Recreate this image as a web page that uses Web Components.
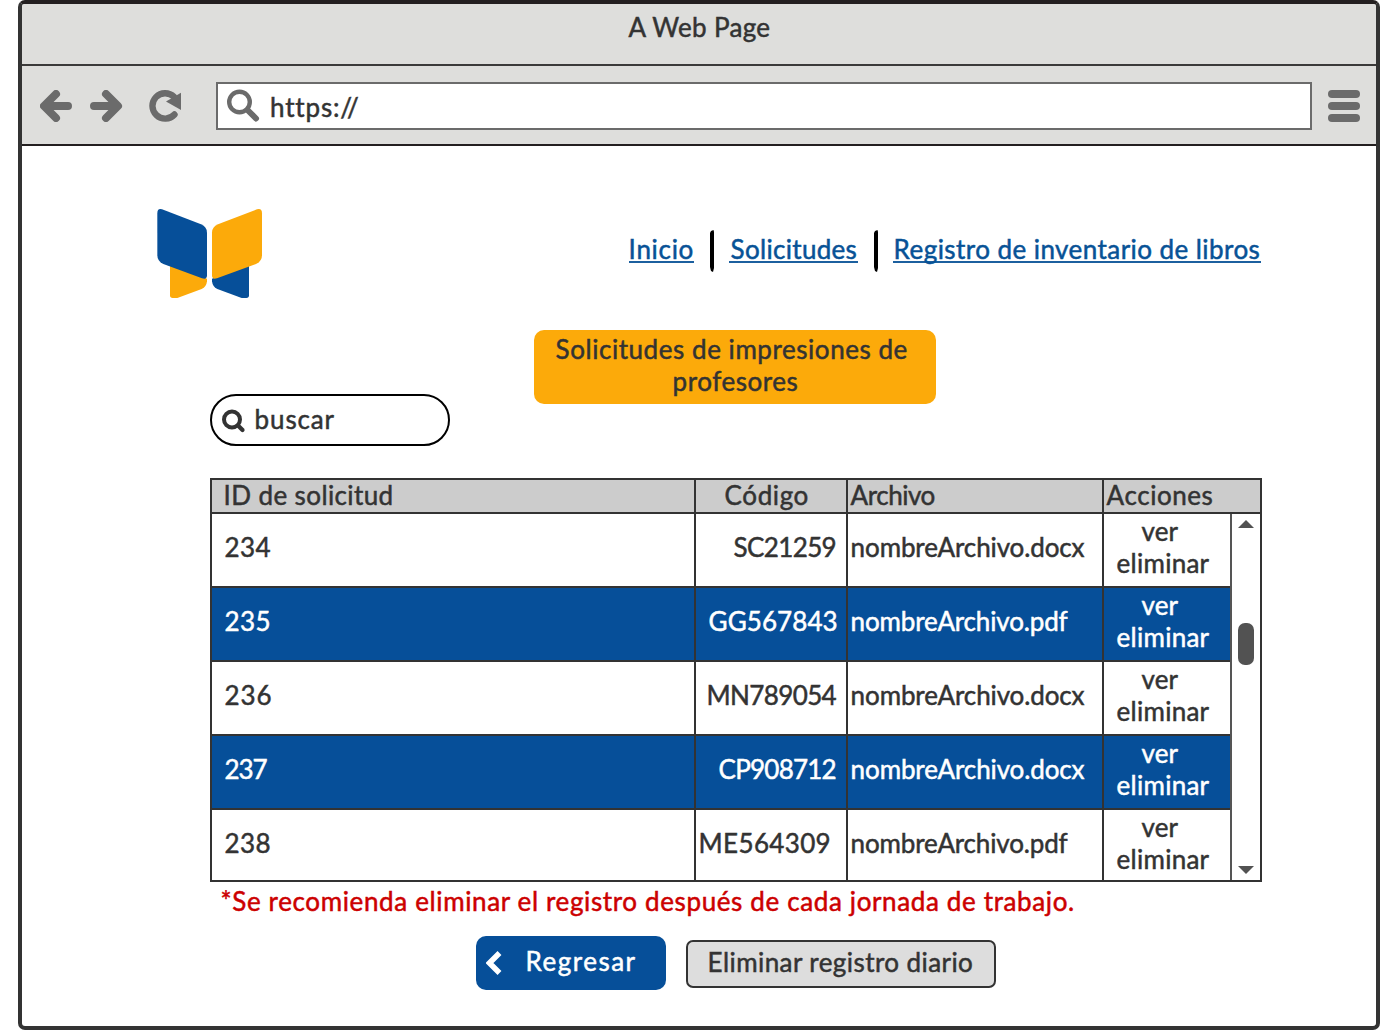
<!DOCTYPE html>
<html lang="es">
<head>
<meta charset="utf-8">
<title>A Web Page</title>
<style>
html,body{margin:0;padding:0;background:#fff}
body{font:26px/32px Lato,"Open Sans",sans-serif;color:#333;height:1030px;overflow:hidden}
</style>
</head>
<body>
<app-page></app-page>
<script>
const ctx = document.createElement('canvas').getContext('2d');

// Text set to an exact inked width by spreading its letters.
class FitText extends HTMLElement {
  connectedCallback() {
    const text = this.getAttribute('text'), w = +this.getAttribute('w');
    ctx.font = '26px Lato, "Open Sans", sans-serif';
    const m = ctx.measureText(text);
    const ink = m.actualBoundingBoxLeft + m.actualBoundingBoxRight;
    const gap = (w - ink) / (text.length - 1);
    this.attachShadow({mode: 'open'}).innerHTML = `<style>
      :host{display:block;box-sizing:border-box;flex:none;width:${w}px;height:32px;padding-top:1px;white-space:nowrap}
      span{display:block;width:max-content;font-size:26px;line-height:32px;margin-left:${m.actualBoundingBoxLeft + 0.6}px;
        letter-spacing:${gap}px;font-variant-ligatures:none;-webkit-text-stroke:.5px currentColor}
    </style><span></span>`;
    this.shadowRoot.querySelector('span').textContent = text;
  }
}
customElements.define('fit-text', FitText);

function define(name, html) {
  const t = document.createElement('template');
  t.innerHTML = html;
  customElements.define(name, class extends HTMLElement {
    constructor() {
      super();
      this.attachShadow({mode: 'open'}).append(t.content.cloneNode(true));
    }
  });
}

define('browser-toolbar', `<style>
  :host{display:flex;box-sizing:border-box;height:80px;background:#dededc;border-bottom:2px solid #231f20;padding:16px 16px 0 18px}
  svg{display:block;flex:none}
  .nav{margin-top:8px}
  .url{display:flex;box-sizing:border-box;width:1096px;height:48px;margin-left:34px;background:#fff;border:2px solid #6b6b6b;padding:5px 0 0 8px}
  fit-text{margin:1px 0 0 10.5px}
  .menu{display:flex;flex-direction:column;gap:4px;margin:8px 0 0 16px;width:32px}
  .menu i{height:8px;border-radius:4px;background:#6b6b6b}
</style>
<svg class="nav" width="142" height="32" fill="none" stroke="#6b6b6b" stroke-width="8" stroke-linecap="round" stroke-linejoin="round">
  <path d="M16 4L4 16L16 28M5 16H28M66 4L78 16L66 28M54 16H77"/>
  <path d="M134.500 24.500A12.700 12.700 0 1 1 134 6.800" stroke-width="6.400"/>
  <path d="M126 11.500L141 2.800V20Z" fill="#6b6b6b" stroke="none"/>
</svg>
<div class="url">
  <svg width="34" height="34" fill="none" stroke="#6b6b6b"><circle cx="13.500" cy="13" r="10.300" stroke-width="4.400"/><path d="M21.500 21L30 29.500" stroke-width="6" stroke-linecap="round"/></svg>
  <fit-text text="https://" w="86"></fit-text>
</div>
<div class="menu"><i></i><i></i><i></i></div>`);

define('browser-window', `<style>
  :host{display:block;box-sizing:border-box;width:1362px;height:1030px;margin-left:18px;border:4px solid #333;border-radius:7px;overflow:hidden;
    background:#fff;border-top-color:#231f20}
  .title{display:flex;justify-content:center;box-sizing:border-box;height:62px;padding-top:6px;background:#dededc;border-bottom:2px solid #3b3a3a}
</style>
<div class="title"><fit-text text="A Web Page" w="142"></fit-text></div>
<browser-toolbar></browser-toolbar>
<slot></slot>`);

define('book-logo', `<style>:host{display:block;width:106px;height:90px;padding-top:1px}svg{display:block}</style>
<svg width="106" height="89.500" viewBox="51 41 318 268.500">
  <path fill="#fcaa0a" d="M90 205L201 250V258Q199 275 185 281L112 308H98Q90 308 90 300Z"/>
  <path fill="#064f99" d="M327 205L216 250V258Q218 275 232 281L305 308H319Q327 308 327 300Z"/>
  <path fill="#064f99" d="M52 54Q52 38 66 42L183 87Q201 95 201 112V240Q201 254 186 249L70 206Q52 198 52 180Z"/>
  <path fill="#fcaa0a" d="M366 54Q366 38 351 42L234 87Q216 95 216 112V240Q216 254 231 249L348 206Q366 198 366 180Z"/>
</svg>`);

define('nav-links', `<style>
  :host{display:flex;align-items:flex-start}
  .link{color:#075296;border-bottom:2px solid #1c609f;height:29px;margin-top:2px;padding-left:1px;box-sizing:content-box}
  svg{display:block;margin:0 15px 0 16px}
</style>
<div class="link" style="width:64px"><fit-text text="Inicio" w="62"></fit-text></div>
<svg width="4" height="42"><path d="M1 1L3.500 0L4 2V38L3 42L1 41L0 37V3Z"/></svg>
<div class="link" style="width:128px;"><fit-text text="Solicitudes" w="126"></fit-text></div>
<svg width="4" height="42"><path d="M1 1L3.500 0L4 2V38L3 42L1 41L0 37V3Z"/></svg>
<div class="link" style="width:366px;padding-left:2px"><fit-text text="Registro de inventario de libros" w="364"></fit-text></div>`);

define('search-pill', `<style>
  :host{display:flex;box-sizing:border-box;width:240px;height:52px;border:2px solid #000;border-radius:26px;background:#fff;padding:6px 0 0 9px}
  svg{display:block;margin-top:7px}
  fit-text{margin-left:9px}
</style>
<svg width="25" height="26" fill="none" stroke="#333"><circle cx="11" cy="10.500" r="8" stroke-width="4"/><path d="M17 16.500L21.500 21" stroke-width="4.200" stroke-linecap="round"/></svg>
<fit-text text="buscar" w="79"></fit-text>`);

define('page-heading', `<style>
  :host{display:flex;flex-direction:column;align-items:center;box-sizing:border-box;width:402px;height:74px;padding:2px 0 0 0;border-radius:10px;background:#fcaa0a}
</style>
<fit-text text="Solicitudes de impresiones de" w="351" style="margin-right:9px"></fit-text>
<fit-text text="profesores" w="124"></fit-text>`);

define('scroll-bar', `<style>
  :host{display:flex;flex-direction:column;align-items:center;box-sizing:border-box;width:30px;border-left:2px solid #555;padding:6px 0}
  svg{display:block}
  i{width:16px;height:42px;margin:95px 0 auto;border-radius:7px;background:#525252}
</style>
<svg width="16" height="8"><path d="M0 8L8 0L16 8Z" fill="#525252"/></svg><i></i>
<svg width="16" height="8"><path d="M0 0L8 8L16 0Z" fill="#525252"/></svg>`);

class RequestTable extends HTMLElement {
  connectedCallback() {
    const rows = [
      ['234', 45, 'SC21259', 733, 835, 'docx'],
      ['235', 44, 'GG567843', 709, 836, 'pdf'],
      ['236', 45, 'MN789054', 708, 836, 'docx'],
      ['237', 42, 'CP908712', 719, 835, 'docx'],
      ['238', 44, 'ME564309', 700, 829, 'pdf']];
    this.attachShadow({mode: 'open'}).innerHTML = `<style>
      :host{display:block;box-sizing:border-box;width:1052px;height:404px;border:2px solid #333;background:#fff}
      .row,.head{display:grid;grid-template-columns:484px 152px 256px 1fr}
      .head{height:32px;background:#ccc;border-bottom:2px solid #333}
      .head>div{height:32px}
      .head fit-text{margin-top:-2px}
      .body{display:flex;height:366px}
      .rows{width:1018px}
      .row{box-sizing:border-box;height:74px;border-bottom:2px solid #333}
      .row:nth-child(even){background:#064f99;color:#fff}
      .row:last-child{height:70px;border:0}
      .row>div,.head>div{box-sizing:border-box;border-right:2px solid #333}
      .row>div:last-child,.head>div:last-child{border-right:0}
      .row>div{padding-top:16px;height:72px}
      .row:last-child>div{height:70px}
      .row>.act{padding-top:0}
    </style>
    <div class="head">
      <div style="padding-left:13px"><fit-text text="ID de solicitud" w="166"></fit-text></div>
      <div style="padding-left:29px"><fit-text text="Código" w="82"></fit-text></div>
      <div style="padding-left:2px"><fit-text text="Archivo" w="84"></fit-text></div>
      <div style="padding-left:2px"><fit-text text="Acciones" w="106"></fit-text></div>
    </div>
    <div class="body"><div class="rows">${rows.map(r => `<div class="row">
      <div style="padding-left:13px"><fit-text text="${r[0]}" w="${r[1]}"></fit-text></div>
      <div style="padding-left:${r[3] - 696}px"><fit-text text="${r[2]}" w="${r[4] - r[3]}"></fit-text></div>
      <div style="padding-left:3px"><fit-text text="nombreArchivo.${r[5]}" w="${r[5] === 'pdf' ? 216 : 233}"></fit-text></div>
      <div class="act"><fit-text text="ver" w="37" style="margin-left:37px"></fit-text><fit-text text="eliminar" w="92" style="margin-left:13px"></fit-text></div>
    </div>`).join('')}</div><scroll-bar></scroll-bar></div>`;
  }
}
customElements.define('request-table', RequestTable);

define('action-buttons', `<style>
  :host{display:flex;align-items:flex-start;gap:20px}
  div{display:flex;box-sizing:border-box}
  .back{width:190px;height:54px;padding:8px 0 0 10px;border-radius:10px;background:#064f99;color:#fff}
  .back svg{display:block;margin:7px 25px 0 0}
  .clear{width:310px;height:48px;margin-top:4px;padding:3px 0 0 21px;border:2px solid #333;border-radius:7px;background:#ddd}
</style>
<div class="back"><svg width="16" height="24" fill="none" stroke="#fff" stroke-width="5.500"><path d="M13.500 2L3.500 12L13.500 22"/></svg><fit-text text="Regresar" w="108"></fit-text></div>
<div class="clear"><fit-text text="Eliminar registro diario" w="263"></fit-text></div>`);

define('app-page', `<style>
  :host{display:block}
  .top{display:flex;height:90px;margin:62px 0 0 135px}
  nav-links{margin:22px 0 0 366px}
  .tools{display:flex;gap:84px;height:116px;margin:32px 0 32px 188px}
  search-pill{align-self:flex-end}
  request-table{margin-left:188px}
  .note{color:#c00;margin:2px 0 20px 199px}
  action-buttons{margin-left:454px}
</style>
<browser-window>
  <div class="top"><book-logo></book-logo><nav-links></nav-links></div>
  <div class="tools"><search-pill></search-pill><page-heading></page-heading></div>
  <request-table></request-table>
  <div class="note"><fit-text text="*Se recomienda eliminar el registro después de cada jornada de trabajo." w="852"></fit-text></div>
  <action-buttons></action-buttons>
</browser-window>`);
</script>
</body>
</html>
